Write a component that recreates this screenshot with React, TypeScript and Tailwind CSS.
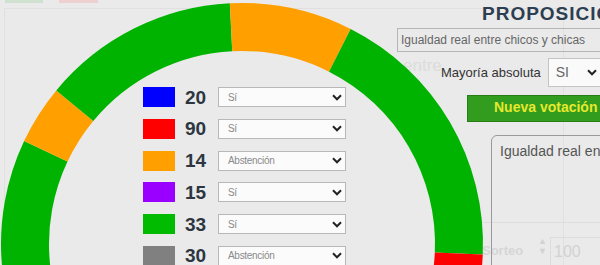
// Votación: hemiciclo coloreado por voto, leyenda por grupo y panel de proposición.

const CX = 242;
const CY = 244;
const R_OUT = 241;
const R_IN = 193;

const SEGMENTS = [
  { from: 154.7, to: 215, color: "#00b300" },
  { from: 140.4, to: 154.7, color: "#ffa000" },
  { from: 92.9, to: 140.4, color: "#00b300" },
  { from: 63.2, to: 92.9, color: "#ffa000" },
  { from: -2.5, to: 63.2, color: "#00b300" },
  { from: -40, to: -2.5, color: "#ff0000" },
];

const GROUPS = [
  { color: "bg-[#0000ff]", seats: 20, vote: "Sí" },
  { color: "bg-[#ff0000]", seats: 90, vote: "Sí" },
  { color: "bg-[#ff9f00]", seats: 14, vote: "Abstención" },
  { color: "bg-[#9900ff]", seats: 15, vote: "Sí" },
  { color: "bg-[#00bb00]", seats: 33, vote: "Sí" },
  { color: "bg-[#808080]", seats: 30, vote: "Abstención" },
];

function point(angle: number, r: number) {
  const rad = (angle * Math.PI) / 180;
  return `${(CX + r * Math.cos(rad)).toFixed(2)} ${(CY - r * Math.sin(rad)).toFixed(2)}`;
}

function arcPath(lo: number, hi: number) {
  const large = hi - lo > 180 ? 1 : 0;
  return [
    `M ${point(hi, R_OUT)}`,
    `A ${R_OUT} ${R_OUT} 0 ${large} 1 ${point(lo, R_OUT)}`,
    `L ${point(lo, R_IN)}`,
    `A ${R_IN} ${R_IN} 0 ${large} 0 ${point(hi, R_IN)}`,
    "Z",
  ].join(" ");
}

function Chevron({ className = "" }: { className?: string }) {
  return (
    <svg width="10" height="7" viewBox="0 0 10 7" className={className}>
      <path d="M1 1.3 L5 5.3 L9 1.3" stroke="#222" strokeWidth="2" fill="none" />
    </svg>
  );
}

function Hemicycle() {
  return (
    <svg
      width="600"
      height="265"
      viewBox="0 0 600 265"
      className="pointer-events-none absolute left-0 top-0"
    >
      {SEGMENTS.map((s) => (
        <path key={s.from} d={arcPath(s.from, s.to)} fill={s.color} />
      ))}
    </svg>
  );
}

export default function App() {
  return (
    <div className="relative flex h-[265px] w-[600px] overflow-hidden bg-[#eaeaea] font-['Liberation_Sans',Arial,sans-serif]">
      {/* ---------------------------------------------- faded page behind */}
      <div className="pointer-events-none absolute inset-0">
        <div className="absolute left-[5px] top-0 h-[3px] w-[38px] bg-[#cfe2cf]" />
        <div className="absolute left-[59px] top-0 h-[3px] w-[39px] bg-[#efd0d0]" />
        <div className="absolute left-[4px] top-[8px] h-[300px] w-[560px] border border-[#e0e0e0]" />
        <span className="absolute left-[403px] top-[53px] text-[17px] text-[#dcdcdc]">entre</span>
        <div className="absolute left-[480px] top-[222px] h-px w-[130px] bg-[#dedede]" />
        <span className="absolute left-[482px] top-[241px] text-[13px] font-bold text-[#d6d6d6]">
          Sorteo
        </span>
        <span className="absolute left-[538px] top-[236px] flex flex-col text-[9px] leading-[10px] text-[#d2d2d2]">
          <span>▲</span>
          <span>▼</span>
        </span>
        <div className="absolute left-[550px] top-[237px] h-[40px] w-[60px] border border-[#dcdcdc] pl-[3px] pt-[2px] text-[16px] text-[#d2d2d2]">
          100
        </div>
      </div>

      <Hemicycle />

      {/* --------------------------------------------------------- legend */}
      <div className="relative flex w-[397px] shrink-0 flex-col gap-[11.8px] pl-[143px] pt-[87px]">
        {GROUPS.map((g, i) => (
          <div key={i} className="flex h-[20px] items-center">
            <span className={`h-[20px] w-[32px] shrink-0 ${g.color}`} />
            <span className="w-[43px] shrink-0 pl-[10px] text-[19px] font-bold leading-none text-[#2d3640]">
              {g.seats}
            </span>
            <div className="flex h-[20px] w-[128px] shrink-0 items-center justify-between border border-[#b8b8b8] bg-[#fbfbfb] pl-[9px] pr-[3px]">
              <span className="text-[10px] tracking-[-0.3px] text-[#8a8a8a]">{g.vote}</span>
              <Chevron />
            </div>
          </div>
        ))}
      </div>

      {/* ---------------------------------------------------- proposition */}
      <div className="relative flex min-w-0 flex-1 flex-col whitespace-nowrap">
        <h1 className="ml-[85px] mt-[3px] text-[19px] font-bold leading-[22px] tracking-[1px] text-[#2c3e50]">
          PROPOSICIÓN
        </h1>
        <div className="mt-[3px] flex h-[24px] w-[230px] shrink-0 items-center border border-[#b5b5b5] pl-[3px] text-[12px] text-[#666]">
          Igualdad real entre chicos y chicas
        </div>
        <div className="mt-[6px] flex h-[29px] shrink-0 items-center">
          <span className="ml-[44px] text-[13px] text-[#333]">Mayoría absoluta</span>
          <div className="ml-[7px] flex h-[29px] w-[58px] shrink-0 items-center justify-between border border-[#c4c4c4] bg-[#fafafa] pl-[7px] pr-[8px]">
            <span className="text-[14px] text-[#666]">SI</span>
            <Chevron />
          </div>
        </div>
        <button className="ml-[70px] mt-[8px] flex h-[27px] w-[150px] shrink-0 items-center border border-[#287d16] bg-[#319c1d] pb-[2px] pl-[26px] text-[14px] font-bold text-[#e6e82e]">
          Nueva votación
        </button>
        <div className="ml-[94px] mt-[13px] h-[170px] w-[140px] shrink-0 rounded-[6px] border border-[#9a9a9a] pl-[8px] pt-[7px] text-[14px] leading-[16px] text-[#555]">
          Igualdad real entre chicos y chicas
        </div>
      </div>
    </div>
  );
}
